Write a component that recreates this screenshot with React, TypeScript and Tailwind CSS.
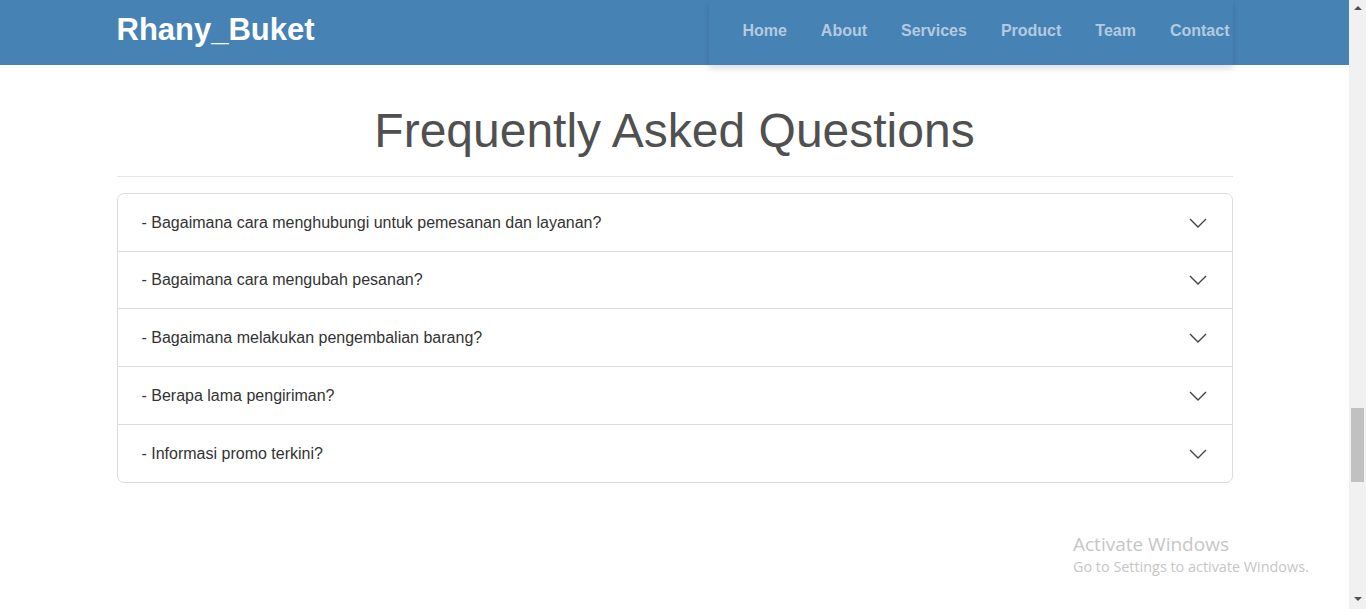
import React from "react";

const faqs = [
  "- Bagaimana cara menghubungi untuk pemesanan dan layanan?",
  "- Bagaimana cara mengubah pesanan?",
  "- Bagaimana melakukan pengembalian barang?",
  "- Berapa lama pengiriman?",
  "- Informasi promo terkini?",
];

const rowClass = [
  "h-[57px]",
  "h-[57px] border-t border-[#dcdcdc]",
  "h-[58px] border-t border-[#dcdcdc]",
  "h-[58px] border-t border-[#dcdcdc]",
  "h-[58px] border-t border-[#dcdcdc]",
];

const links = ["Home", "About", "Services", "Product", "Team", "Contact"];

function Chevron() {
  return (
    <svg width="18" height="10" viewBox="0 0 18 10" fill="none">
      <polyline points="1,1 9,9 17,1" stroke="#444" strokeWidth="1.4" />
    </svg>
  );
}

export default function App() {
  return (
    <div className="relative flex h-[609px] w-[1366px] overflow-hidden bg-white font-['Liberation_Sans',Arial,sans-serif]">
      <div className="flex w-[1349px] flex-col">
        <header className="h-[65px] w-full bg-[#4682b4]">
          <div className="mx-auto flex h-full w-[1140px] items-start justify-between px-3">
            <div className="mt-[11px] text-[31px] font-bold leading-[38px] text-white">Rhany_Buket</div>
            <nav className="relative z-10 flex h-[65px] items-center gap-[34px] bg-[#4682b4] pb-[4px] pl-[33px] pr-[3px] shadow-[0_4px_6px_rgba(0,0,0,0.12)]">
              {links.map((l) => (
                <span key={l} className="text-[16px] font-bold text-[#b3cae0]">
                  {l}
                </span>
              ))}
            </nav>
          </div>
        </header>
        <main className="mx-auto w-[1140px] px-3">
          <h1 className="mt-[37px] text-center text-[48px] leading-[58px] text-[#505050]">Frequently Asked Questions</h1>
          <hr className="mt-[16px] border-t border-[#e5e5e5]" />
          <div className="mt-[16px] overflow-hidden rounded-[7px] border border-[#dcdcdc]">
            {faqs.map((q, i) => (
              <div
                key={q}
                className={`flex items-center justify-between pl-6 pr-[25px] text-[16px] text-[#333] ${rowClass[i]}`}
              >
                <span>{q}</span>
                <Chevron />
              </div>
            ))}
          </div>
        </main>
      </div>
      <div className="flex w-[17px] flex-col items-center bg-[#f1f1f1]">
        <div className="mt-[6px] h-0 w-0 border-x-[4px] border-b-[4px] border-x-transparent border-b-[#505050]" />
        <div className="mt-[398px] h-[74px] w-[13px] bg-[#c1c1c1]" />
        <div className="mt-[115px] h-0 w-0 border-x-[4px] border-t-[4px] border-x-transparent border-t-[#505050]" />
      </div>
      <div className="absolute left-[1073px] top-[531px] font-['Open_Sans','Noto_Sans',sans-serif] text-[#c6c6c6]">
        <div className="text-[19px] leading-[26px]">Activate Windows</div>
        <div className="text-[14.4px] leading-[20px]">Go to Settings to activate Windows.</div>
      </div>
    </div>
  );
}
